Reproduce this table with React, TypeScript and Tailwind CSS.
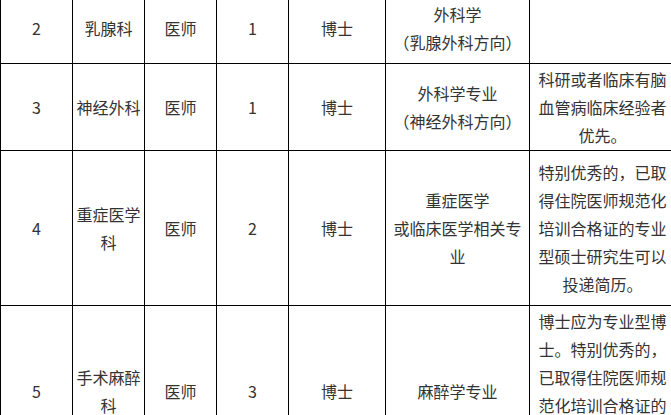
import React from "react";

type Row = {
  h: string;
  no: string;
  dept: React.ReactNode;
  post: string;
  num: string;
  degree: string;
  major: React.ReactNode;
  note: React.ReactNode;
};

const rows: Row[] = [
  {
    h: "h-[71px]",
    no: "2",
    dept: "乳腺科",
    post: "医师",
    num: "1",
    degree: "博士",
    major: (
      <>
        外科学
        <br />
        （乳腺外科方向）
      </>
    ),
    note: "",
  },
  {
    h: "h-[87px]",
    no: "3",
    dept: "神经外科",
    post: "医师",
    num: "1",
    degree: "博士",
    major: (
      <>
        外科学专业
        <br />
        （神经外科方向）
      </>
    ),
    note: "科研或者临床有脑血管病临床经验者优先。",
  },
  {
    h: "h-[155px]",
    no: "4",
    dept: "重症医学科",
    post: "医师",
    num: "2",
    degree: "博士",
    major: (
      <>
        重症医学
        <br />
        或临床医学相关专业
      </>
    ),
    note: "特别优秀的，已取得住院医师规范化培训合格证的专业型硕士研究生可以投递简历。",
  },
  {
    h: "h-[170px]",
    no: "5",
    dept: "手术麻醉科",
    post: "医师",
    num: "3",
    degree: "博士",
    major: "麻醉学专业",
    note: "博士应为专业型博士。特别优秀的，已取得住院医师规范化培训合格证的专业型硕士研究生可以投递简历。",
  },
];

const cell =
  "border border-black text-center align-middle px-[3px] py-0 break-all";

export default function App() {
  return (
    <div className="w-[671px] h-[415px] overflow-hidden bg-white">
      <table
        className="-mt-2 table-fixed border-collapse w-[675px] text-[16px] leading-[28px] text-[#333333]"
        style={{ fontFamily: '"Noto Sans CJK SC", "Noto Sans", sans-serif' }}
      >
        <colgroup>
          <col className="w-[72px]" />
          <col className="w-[72px]" />
          <col className="w-[72px]" />
          <col className="w-[72px]" />
          <col className="w-[97px]" />
          <col className="w-[144px]" />
          <col className="w-[146px]" />
        </colgroup>
        <tbody>
          {rows.map((r) => (
            <tr key={r.no} className={r.h}>
              <td className={cell}>{r.no}</td>
              <td className={cell}>{r.dept}</td>
              <td className={cell}>{r.post}</td>
              <td className={cell}>{r.num}</td>
              <td className={cell}>{r.degree}</td>
              <td className={cell}>{r.major}</td>
              <td className={cell}>{r.note}</td>
            </tr>
          ))}
        </tbody>
      </table>
    </div>
  );
}
